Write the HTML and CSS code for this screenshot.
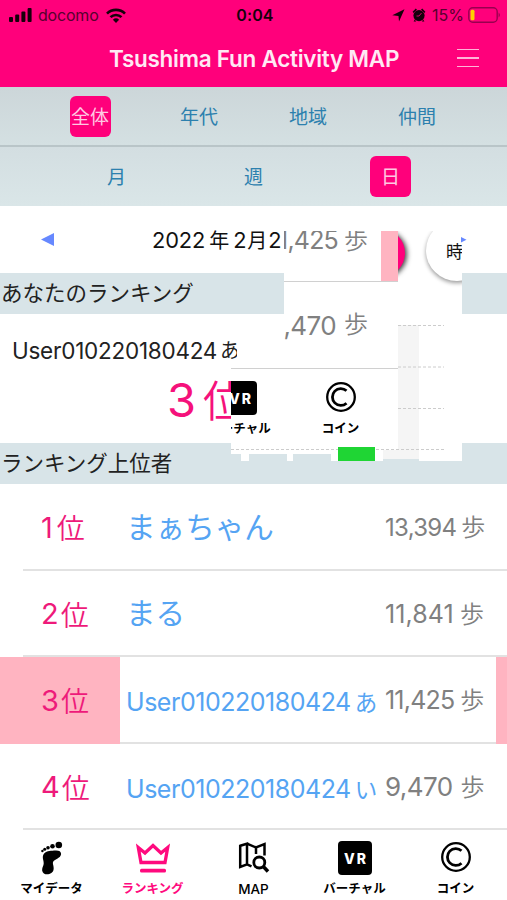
FILE: index.html
```html
<!DOCTYPE html>
<html lang="ja">
<head>
  <meta charset="UTF-8" />
  <title>Tsushima Fun Activity MAP</title>
  <link rel="stylesheet" href="styles.css">
</head>
<body>

  <!-- shared icons -->
  <svg class="defs" width="0" height="0">
    <symbol id="icon-vr" viewBox="0 0 34 34">
      <rect width="34" height="34" rx="4" />
      <text class="vr-text" x="6" y="22.5">VR</text>
    </symbol>
    <symbol id="icon-coin" viewBox="0 0 32 32">
      <circle cx="16" cy="16" r="13.8" fill="none" stroke="currentColor" stroke-width="2.3" />
      <path d="M21.5 9.8A8.4 8.4 0 1 0 21.5 22.2" fill="none" stroke="currentColor" stroke-width="2.8" />
    </symbol>
  </svg>

  <header class="app-header">
    <div class="status-bar">
      <div class="carrier">
        <svg width="23" height="14" viewBox="0 0 23 14">
          <rect x="0" y="9" width="4" height="5" rx="1" />
          <rect x="6.2" y="6.5" width="4" height="7.5" rx="1" />
          <rect x="12.4" y="3.5" width="4" height="10.5" rx="1" />
          <rect x="18.6" y="0" width="4" height="14" rx="1" />
        </svg>
        <span class="carrier-name">docomo</span>
        <svg width="20" height="15" viewBox="0 0 20 15">
          <path d="M1 5.6a12.8 12.8 0 0 1 18 0" fill="none" stroke="#16000b" stroke-width="2.7" />
          <path d="M4.5 9.2a7.8 7.8 0 0 1 11 0" fill="none" stroke="#16000b" stroke-width="2.6" />
          <path d="M10 15 6.9 11.7a4.5 4.5 0 0 1 6.2 0z" />
        </svg>
      </div>
      <div class="clock">0:04</div>
      <div class="device">
        <svg width="13" height="13" viewBox="0 0 13 13"><path d="M12.5.3 7 12.6 6.5 7 .3 6.2z" /></svg>
        <svg class="alarm" width="14" height="14" viewBox="0 0 14 14">
          <path d="M.6 3.7 3.8.6 5 1.7 1.5 4.9zM13.4 3.7 10.2.6 9 1.7l3.5 3.2z" />
          <circle cx="7" cy="7.6" r="5.6" />
          <path d="M2.8 11.5 1.6 13.4h2.5zM11.2 11.5l1.2 1.9H9.9z" />
          <path d="M9.5 5 7 8H4.5" fill="none" stroke="#d0006a" />
        </svg>
        <span class="percent">15%</span>
        <svg width="33" height="16" viewBox="0 0 33 16">
          <rect x=".8" y=".8" width="28.4" height="14.4" rx="4" fill="none" stroke="#98004f" stroke-width="1.4" />
          <rect x="2.5" y="2.8" width="4" height="10.4" rx="1.5" fill="#ffd000" />
          <path d="M30.6 5.4q2.6 2.6 0 5.2z" fill="#98004f" />
        </svg>
      </div>
    </div>
    <div class="title-bar">
      <h1>Tsushima Fun Activity MAP</h1>
      <div class="menu"><span></span><span></span><span></span></div>
    </div>
  </header>

  <nav class="scope-tabs">
    <a class="active">全体</a>
    <a>年代</a>
    <a>地域</a>
    <a>仲間</a>
  </nav>
  <nav class="period-tabs">
    <a>月</a>
    <a>週</a>
    <a class="active">日</a>
  </nav>

  <main>
    <div class="date-row">
      <svg class="prev" width="14" height="13" viewBox="0 0 14 13"><path d="M0 6.5 13 0v13z" /></svg>
      <span class="date">2022<i class="year">年</i>2<i>月</i>2</span>
      <svg class="next" width="6" height="6" viewBox="0 0 6 6"><path d="M0 0 5.5 2.7 0 5.4z" /></svg>
    </div>

    <h2>あなたのランキング</h2>
    <div class="mine">
      <div class="mine-name">User010220180424<i>あ</i></div>
      <div class="mine-rank">3<i>位</i></div>
    </div>

    <h2>ランキング上位者</h2>
    <ul class="ranking">
      <li>
        <span class="rank first">1<i>位</i></span>
        <span class="name wide">まぁちゃん</span>
        <span class="steps s1"><b>13,394</b><i>歩</i></span>
      </li>
      <li>
        <span class="rank">2<i>位</i></span>
        <span class="name wide">まる</span>
        <span class="steps s2"><b>11,841</b><i>歩</i></span>
      </li>
      <li class="me">
        <span class="rank">3<i>位</i></span>
        <span class="name">User010220180424<i>あ</i></span>
        <span class="steps s3"><b>11,425</b><i>歩</i></span>
      </li>
      <li>
        <span class="rank">4<i>位</i></span>
        <span class="name">User010220180424<i>い</i></span>
        <span class="steps s4"><b>9,470</b><i>歩</i></span>
      </li>
    </ul>

    <!-- floating panels over the date and my-ranking areas -->
    <div class="float-top">
      <div class="round-pink"></div>
      <div class="round-white"><span>時</span></div>
      <div class="float-row marked"><span class="steps s3"><b>1,425</b><i>歩</i></span></div>
      <div class="float-row"><span class="steps s4"><b>,470</b><i>歩</i></span></div>
    </div>
    <div class="float-tabs">
      <div class="tab vr"><svg width="34" height="34"><use href="#icon-vr" /></svg><span>バーチャル</span></div>
      <div class="tab coin"><svg width="32" height="32"><use href="#icon-coin" /></svg><span>コイン</span></div>
    </div>
    <svg class="float-chart" width="231" height="136" viewBox="0 0 231 136">
      <path d="M167 0H231V136H0V118H167z" fill="#fff" />
      <rect x="167" y="0" width="21" height="134" fill="#f5f5f5" />
      <path d="M0 129h10v7H0zM18 129h38v7H18zM62 129h38v7H62zM152 134h36v2h-36z" fill="#d8e4e8" />
      <rect x="152" y="125" width="20" height="9" fill="#f5f5f5" />
      <path d="M167 .5h46M167 42h46M167 83.5h46M0 124.5h213" stroke="#ccc" stroke-dasharray="3 2" />
      <rect x="107" y="122" width="37" height="14" fill="#1fd534" />
    </svg>
  </main>

  <nav class="tab-bar">
    <div class="tab">
      <svg width="34" height="34" viewBox="0 0 34 34">
        <circle cx="23.8" cy="4" r="3.3" />
        <circle cx="17.5" cy="5.2" r="2.3" />
        <circle cx="13" cy="6.8" r="1.8" />
        <circle cx="9.7" cy="8.3" r="1.5" />
        <circle cx="7.4" cy="10" r="1.2" />
        <path d="M8.2 14C10.5 9.8 15 10 19 9.6c5-.6 7.5.8 7 4-.5 4-6.8 4.6-8 7.6-.5 2 1 4 .6 7-.5 6-10.6 7-11.4 1.5-.4-3 1.5-5 1.5-7.5 0-3.5-1.6-5-.5-8.2z" />
      </svg>
      <span>マイデータ</span>
    </div>
    <div class="tab current">
      <svg width="34" height="34" viewBox="0 0 34 34">
        <path d="M2.3 6.5 9 12 17 4.5l8 7.5 6.7-5.5L29 21.500H5z" fill="none" stroke="currentColor" stroke-width="3.3" />
        <rect x="4" y="27.8" width="26" height="3.8" rx="1.5" />
      </svg>
      <span>ランキング</span>
    </div>
    <div class="tab">
      <svg width="34" height="34" viewBox="0 0 34 34">
        <g fill="none" stroke="currentColor" stroke-width="2.5">
          <path d="M3.2 4.8 10 2.7V23.3L3.2 26zM10 2.7 19 6.5 27.5 3.2V14.500M10 23.300l4.500 2M19 6.500V13" />
          <circle cx="22.3" cy="21.5" r="5.5" stroke-width="2.8" />
          <path d="M26.3 25.5 31 30.5" stroke-width="3.5" />
        </g>
      </svg>
      <span class="latin">MAP</span>
    </div>
    <div class="tab vr"><svg width="34" height="34"><use href="#icon-vr" /></svg><span>バーチャル</span></div>
    <div class="tab coin"><svg width="32" height="32"><use href="#icon-coin" /></svg><span>コイン</span></div>
  </nav>

</body>
</html>
```

FILE: styles.css
```css
* {
  box-sizing: border-box;
}

body {
  margin: 0;
  width: 507px;
  height: 900px;
  overflow: hidden;
  background: #fff;
  font-family: Inter, "Noto Sans CJK JP", sans-serif;
  color: #222;
}

i, b {
  font-style: normal;
  font-weight: inherit;
}

svg {
  display: block;
  flex: none;
}

.defs {
  position: absolute;
}

/* header */
.app-header {
  height: 87px;
  background: #ff007b;
}

.status-bar {
  display: grid;
  grid-template-columns: 1fr auto 1fr;
  align-items: center;
  height: 30px;
  padding: 0 6px 0 9px;
  color: #16000b;
  fill: #16000b;
}

.carrier, .device {
  display: flex;
  align-items: center;
}

.carrier-name {
  margin: 0 7px 0 6px;
  font-size: 16px;
  letter-spacing: -0.2px;
  color: #58002e;
}

.clock {
  font-size: 16px;
  font-weight: 600;
  letter-spacing: 0.1px;
}

.device {
  justify-content: flex-end;
}

.alarm {
  margin: 0 6px 0 7px;
}

.percent {
  margin-right: 4px;
  font-size: 16px;
  color: #58002e;
}

.title-bar {
  display: flex;
  align-items: center;
  height: 57px;
  padding: 0 28px 1px 109px;
}

h1 {
  flex: 1;
  margin: 0;
  font-size: 22.5px;
  font-weight: 600;
  letter-spacing: -0.27px;
  color: #ffe9f4;
  white-space: nowrap;
}

.menu {
  display: grid;
  gap: 7px;
  width: 22px;
}

.menu span {
  height: 1.5px;
  background: #ffb3d8;
}

/* tabs */
.scope-tabs, .period-tabs {
  display: grid;
  justify-content: center;
  place-items: center;
  font-size: 19px;
  color: #2c80ae;
}

.scope-tabs {
  grid-template-columns: repeat(4, 109px);
  height: 60px;
  padding-top: 1px;
  background: linear-gradient(#ccd6d9, #d4e0e2);
  border-bottom: 2px solid #b9c5c8;
}

.period-tabs {
  grid-template-columns: repeat(3, 137px);
  height: 59px;
  background: linear-gradient(#d3dee1, #dae6e8);
}

.scope-tabs a, .period-tabs a {
  width: 41px;
  height: 41px;
  line-height: 44px;
  text-align: center;
  border-radius: 6px;
}

.scope-tabs .active, .period-tabs .active {
  background: #ff007b;
  color: #ffc8e2;
}

/* main */
main {
  position: relative;
  height: 623px;
}

.date-row {
  display: flex;
  align-items: center;
  height: 67px;
  padding-left: 41px;
  fill: #6688ff;
}

.date {
  flex: 1;
  margin-left: 97px;
  font-size: 21.8px;
  letter-spacing: -0.1px;
  color: #111;
}

.date i {
  margin: 0 1px;
  font-size: 20px;
}

.date .year {
  margin: 0 4px;
}

.next {
  position: relative;
  z-index: 1;
  margin-right: 40px;
}

h2 {
  height: 41px;
  margin: 0;
  padding-left: 1px;
  background: #d8e4e8;
  font-size: 21.5px;
  font-weight: 400;
  line-height: 41px;
}

.mine {
  height: 129px;
  padding: 23px 12px 0;
}

.mine-name {
  display: flex;
  font-size: 22.5px;
  line-height: 28px;
  letter-spacing: -0.25px;
}

.mine-name i {
  width: 17px;
  margin-left: 3px;
  overflow: hidden;
  font-size: 20px;
}

.mine-rank {
  padding-left: 155px;
  font-size: 47px;
  line-height: 70px;
  color: #f5117b;
}

.mine-rank i {
  margin-left: 7px;
  font-size: 43px;
  font-weight: 350;
}

.ranking {
  margin: 0;
  padding: 0;
  list-style: none;
}

.ranking li {
  display: grid;
  grid-template-columns: 120px 1fr 122px;
  align-items: center;
  height: 86.5px;
  background: linear-gradient(#e2e2e2, #e2e2e2) 23px 100% / 484px 2px no-repeat;
}

.rank {
  display: flex;
  align-items: center;
  align-self: stretch;
  padding-left: 41px;
  font-size: 29px;
  color: #ee1a7a;
}

.rank i {
  margin-left: 2px;
  font-size: 28px;
  font-weight: 350;
}

.rank.first i {
  margin-left: 4px;
}

.name {
  padding: 2px 0 0 6px;
  font-size: 25px;
  letter-spacing: -0.47px;
  color: #55a4f3;
  white-space: nowrap;
}

.name.wide {
  padding: 0 0 4px 6px;
  font-size: 29.6px;
  letter-spacing: 0;
}

.name i {
  margin-left: 4px;
  font-size: 22.5px;
}

.steps {
  display: flex;
  align-items: center;
  color: #808080;
  white-space: nowrap;
}

.steps i {
  margin: -3px 0 0 6px;
  font-size: 24px;
  font-weight: 350;
  letter-spacing: 0;
}

.s1 {
  font-size: 24px;
  letter-spacing: -0.7px;
}

.s2 {
  font-size: 25px;
  letter-spacing: 0.1px;
}

.s3 {
  font-size: 25px;
  letter-spacing: -0.8px;
}

.s4 {
  font-size: 26px;
  letter-spacing: -0.6px;
}

.s1 i {
  margin-left: 5px;
}

.s4 i {
  margin-left: 8px;
}

.me {
  box-shadow: inset -11px 0 #ffb4c1;
}

.me .rank {
  background: #ffb4c1;
}

/* floating panels */
.float-top {
  position: absolute;
  left: 284px;
  top: 25px;
  width: 178px;
  height: 137px;
  overflow: hidden;
  background: #fff;
}

.float-row {
  position: relative;
  display: flex;
  align-items: flex-start;
  justify-content: flex-end;
  width: 114px;
  height: 86px;
  padding: 27px 30px 0 0;
  overflow: hidden;
  background: #fff;
  line-height: 34px;
}

.float-row.marked {
  height: 51px;
  padding-top: 0;
  border-bottom: 1px solid #d0d0d0;
  line-height: 19px;
  box-shadow: inset -17px 0 #ffb4c1;
}

.float-row.marked .steps i {
  margin-top: -1px;
}

.round-pink, .round-white {
  position: absolute;
  border-radius: 50%;
}

.round-pink {
  left: 73px;
  top: -2px;
  width: 48px;
  height: 48px;
  background: #ff007b;
  box-shadow: 2px 1px 5px #000b;
}

.round-white {
  left: 142px;
  top: -11px;
  width: 62px;
  height: 61px;
  background: #fff;
  box-shadow: 0 2px 4px #0006;
  color: #111;
  font-size: 17px;
  line-height: 64px;
}

.round-white span {
  padding-left: 20px;
}

.float-tabs {
  position: absolute;
  left: 231px;
  top: 162px;
  display: flex;
  width: 167px;
  height: 76px;
  overflow: hidden;
  background: #fff;
  border-top: 1px solid #d0d0d0;
}

.float-tabs .tab {
  flex: none;
  width: 101px;
  margin-left: -42px;
}

.float-tabs .tab + .tab {
  margin-left: 0;
}

.float-chart {
  position: absolute;
  left: 231px;
  top: 119px;
}

/* bottom tabs */
.tab-bar {
  display: grid;
  grid-template-columns: repeat(5, 101px);
  height: 71px;
  padding-left: 1px;
}

.tab {
  display: flex;
  flex-direction: column;
  align-items: center;
  padding-top: 12px;
  font-size: 12.5px;
  font-weight: 700;
  line-height: 18px;
  color: #000;
  white-space: nowrap;
}

.tab svg {
  margin-bottom: 5px;
  fill: currentColor;
}

.tab.coin svg {
  margin: 0 0 7px;
}

.tab.current {
  color: #ff0a7e;
}

.tab .latin {
  font-size: 13.5px;
  font-weight: 500;
}

.vr-text {
  fill: #fff;
  font: 800 14px Inter, sans-serif;
  letter-spacing: 2px;
}
```
